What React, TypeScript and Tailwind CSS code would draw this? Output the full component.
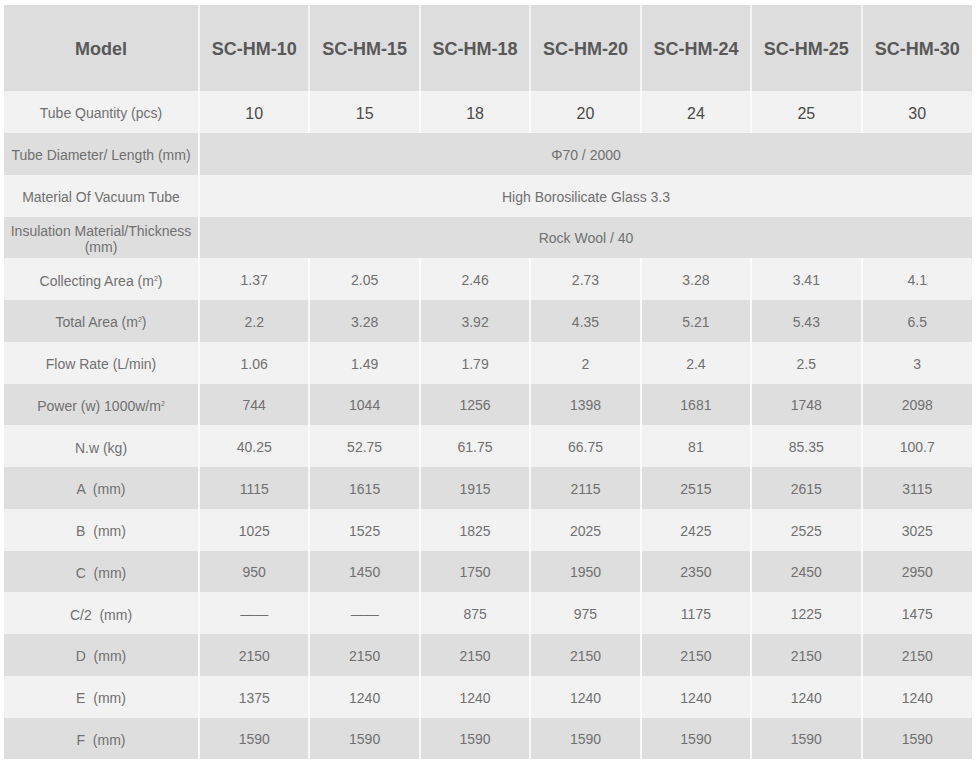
import React from "react";

const models = ["SC-HM-10", "SC-HM-15", "SC-HM-18", "SC-HM-20", "SC-HM-24", "SC-HM-25", "SC-HM-30"];

type Row = { label: React.ReactNode; values?: string[]; span?: string };

const sup = (t: string) => <span className="relative -top-[5px] text-[7px] leading-none">{t}</span>;

const rows: Row[] = [
  { label: "Tube Diameter/ Length (mm)", span: "Φ70 / 2000" },
  { label: "Material Of Vacuum Tube", span: "High Borosilicate Glass 3.3" },
  { label: <>Insulation Material/Thickness<br />(mm)</>, span: "Rock Wool / 40" },
  { label: <>Collecting Area (m{sup("2")})</>, values: ["1.37", "2.05", "2.46", "2.73", "3.28", "3.41", "4.1"] },
  { label: <>Total Area (m{sup("2")})</>, values: ["2.2", "3.28", "3.92", "4.35", "5.21", "5.43", "6.5"] },
  { label: "Flow Rate (L/min)", values: ["1.06", "1.49", "1.79", "2", "2.4", "2.5", "3"] },
  { label: <>Power (w) 1000w/m{sup("2")}</>, values: ["744", "1044", "1256", "1398", "1681", "1748", "2098"] },
  { label: "N.w (kg)", values: ["40.25", "52.75", "61.75", "66.75", "81", "85.35", "100.7"] },
  { label: "A  (mm)", values: ["1115", "1615", "1915", "2115", "2515", "2615", "3115"] },
  { label: "B  (mm)", values: ["1025", "1525", "1825", "2025", "2425", "2525", "3025"] },
  { label: "C  (mm)", values: ["950", "1450", "1750", "1950", "2350", "2450", "2950"] },
  { label: "C/2  (mm)", values: ["——", "——", "875", "975", "1175", "1225", "1475"] },
  { label: "D  (mm)", values: ["2150", "2150", "2150", "2150", "2150", "2150", "2150"] },
  { label: "E  (mm)", values: ["1375", "1240", "1240", "1240", "1240", "1240", "1240"] },
  { label: "F  (mm)", values: ["1590", "1590", "1590", "1590", "1590", "1590", "1590"] },
];

const tube = ["10", "15", "18", "20", "24", "25", "30"];

export default function App() {
  return (
    <div className="w-[980px] h-[766px] bg-white pt-[5px] pl-[4px]" style={{ fontFamily: "'Liberation Sans', Arial, sans-serif" }}>
      <table className="w-[968px] table-fixed border-collapse">
        <colgroup>
          <col className="w-[195px]" />
          {models.map((m) => (
            <col key={m} />
          ))}
        </colgroup>
        <thead>
          <tr className="h-[86px] bg-[#dddddd]">
            <th className="pt-[2px] text-[18px] font-bold text-[#585858] text-center">Model</th>
            {models.map((m) => (
              <th key={m} className="pt-[2px] border-l-2 border-[#f4f4f4] text-[18px] font-bold text-[#585858] text-center">
                {m}
              </th>
            ))}
          </tr>
        </thead>
        <tbody>
          <tr className="h-[42px] bg-[#f2f2f2]">
            <td className="pt-[3px] text-center text-[14px] text-[#707070]">Tube Quantity (pcs)</td>
            {tube.map((v, i) => (
              <td key={i} className="pt-[3px] border-l-2 border-white/80 text-center text-[16px] text-[#4a4a4a]">
                {v}
              </td>
            ))}
          </tr>
          {rows.map((r, ri) => (
            <tr key={ri} className={`h-[41.75px] ${ri % 2 === 0 ? "bg-[#dedede]" : "bg-[#f2f2f2]"}`}>
              <td className="pt-[3px] text-center text-[14px] leading-[16px] text-[#707070] px-1 whitespace-pre">{r.label}</td>
              {r.span ? (
                <td colSpan={7} className="pt-[3px] border-l-2 border-white/80 text-center text-[14px] text-[#707070]">
                  {r.span}
                </td>
              ) : (
                r.values!.map((v, i) => (
                  <td key={i} className="pt-[3px] border-l-2 border-white/80 text-center text-[14px] text-[#707070]">
                    {v}
                  </td>
                ))
              )}
            </tr>
          ))}
        </tbody>
      </table>
    </div>
  );
}
